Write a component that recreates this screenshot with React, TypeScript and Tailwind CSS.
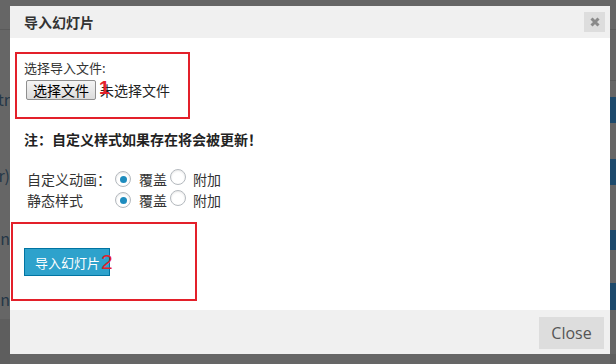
import React from "react";

function Radio({ checked }: { checked?: boolean }) {
  return (
    <span className="inline-flex items-center justify-center w-[16px] h-[16px] rounded-full border border-[#b4b9be] bg-white shadow-[inset_0_1px_2px_rgba(0,0,0,0.1)]">
      {checked && <span className="w-[7px] h-[7px] rounded-full bg-[#1e8cbe]" />}
    </span>
  );
}

export default function App() {
  const cjk = { fontFamily: '"Microsoft YaHei","Noto Sans CJK SC","Noto Sans",sans-serif' };
  return (
    <div
      className="relative w-[616px] h-[364px] overflow-hidden bg-[#666666]"
      style={cjk}
    >
      {/* page behind overlay */}
      <div className="flex h-full">
        <div className="w-[10px] flex flex-col">
          <div className="h-[29px]" />
          <div className="h-px bg-[#5a5a5a]" />
          <div className="h-[58px]" />
          <div className="h-[22px] flex justify-end overflow-hidden whitespace-nowrap text-[16px] leading-[22px] text-[#243646]">str</div>
          <div className="h-[54px]" />
          <div className="h-[22px] flex justify-end overflow-hidden whitespace-nowrap text-[16px] leading-[22px] text-[#243646]">r)</div>
          <div className="h-[41px]" />
          <div className="h-[22px] flex justify-end overflow-hidden whitespace-nowrap text-[16px] leading-[22px] text-[#243646]">n</div>
          <div className="h-[39px]" />
          <div className="h-[22px] flex justify-end overflow-hidden whitespace-nowrap text-[16px] leading-[22px] text-[#243646]">n</div>
          <div className="h-[9px]" />
          <div className="flex-1 bg-[#5e5e5e]" />
        </div>
        <div className="flex-1" />
        <div className="w-[6px] flex flex-col">
          <div className="h-[29px]" />
          <div className="h-px bg-[#5a5a5a]" />
          <div className="h-[50px]" />
          <div className="h-px bg-[#5a5a5a]" />
          <div className="h-[16px]" />
          <div className="h-[26px] bg-[#1d4a6c]" />
          <div className="h-[36px]" />
          <div className="h-[26px] bg-[#1d4a6c]" />
          <div className="h-[45px]" />
          <div className="h-[20px] bg-[#1d4a6c]" />
          <div className="h-[33px]" />
          <div className="h-[27px] bg-[#1d4a6c]" />
          <div className="h-[44px]" />
          <div className="flex-1 bg-[#5e5e5e]" />
        </div>
      </div>

      {/* dialog */}
      <div className="absolute left-[10px] top-[6px] w-[600px] h-[348px] bg-white flex flex-col">
        <div className="h-[32px] bg-[#f0f0f0] flex items-center justify-between pl-[14px] pr-[5px]">
          <span className="text-[14px] font-bold text-[#333] leading-none">导入幻灯片</span>
          <span className="w-[21px] h-[20px] bg-[#dddddd] flex items-center justify-center">
            <svg width="10" height="10" viewBox="0 0 10 10">
              <path d="M1.5 1.5 L8.5 8.5 M8.5 1.5 L1.5 8.5" stroke="#8a8a8a" strokeWidth="3" strokeLinecap="butt" />
            </svg>
          </span>
        </div>

        <div className="flex-1 flex flex-col text-[#333]">
          <div className="mt-[14px] ml-[5px] w-[175px] h-[67px] border-2 border-[#e3202a] pl-[7px] pt-[5px] relative">
            <div className="text-[13px] leading-[18px]">选择导入文件:</div>
            <div className="mt-[3px] flex items-center">
              <span className="ml-[2px] h-[20px] px-[6px] flex items-center border border-[#8f8f8f] rounded-[2px] bg-gradient-to-b from-[#f4f4f4] to-[#dcdcdc] text-[14px] text-black leading-none">选择文件</span>
              <span className="ml-[4px] text-[14px] text-[#222] leading-none">未选择文件</span>
            </div>
            <span className="absolute left-[82px] top-[24px] text-[19px] font-bold leading-none text-[#e3202a]" style={{ fontFamily: '"Liberation Sans",sans-serif' }}>1</span>
          </div>

          <div className="mt-[11px] ml-[14px] text-[14px] font-bold leading-[18px] text-[#222]">注：自定义样式如果存在将会被更新！</div>

          <div className="mt-[23px] ml-[17px] flex flex-col gap-[5px] text-[14px] text-[#333]">
            <div className="flex items-center h-[16px]">
              <span className="w-[88px]">自定义动画：</span>
              <Radio checked />
              <span className="ml-[8px]">覆盖</span>
              <span className="ml-[3px]"><Radio /></span>
              <span className="ml-[7px]">附加</span>
            </div>
            <div className="flex items-center h-[16px]">
              <span className="w-[88px]">静态样式</span>
              <Radio checked />
              <span className="ml-[8px]">覆盖</span>
              <span className="ml-[3px]"><Radio /></span>
              <span className="ml-[7px]">附加</span>
            </div>
          </div>

          <div className="mt-[14px] ml-[1px] w-[186px] h-[79px] border-2 border-[#e3202a] pl-[11px] pt-[24px] relative">
            <div className="w-[86px] h-[28px] bg-[#2ea2cc] border border-[#0074a2] flex items-center pl-[10px] text-[13px] text-white leading-none">导入幻灯片</div>
            <span className="absolute left-[88px] top-[27px] text-[21px] leading-none text-[#e3202a]" style={{ fontFamily: '"Liberation Sans",sans-serif' }}>2</span>
          </div>
        </div>

        <div className="h-[44px] bg-[#f0f0f0] flex justify-end pt-[7px] pr-[6px]">
          <span className="w-[65px] h-[32px] bg-[#dddddd] flex items-center justify-center text-[16px] text-[#555]" style={{ fontFamily: '"Open Sans",sans-serif' }}>Close</span>
        </div>
      </div>
    </div>
  );
}
